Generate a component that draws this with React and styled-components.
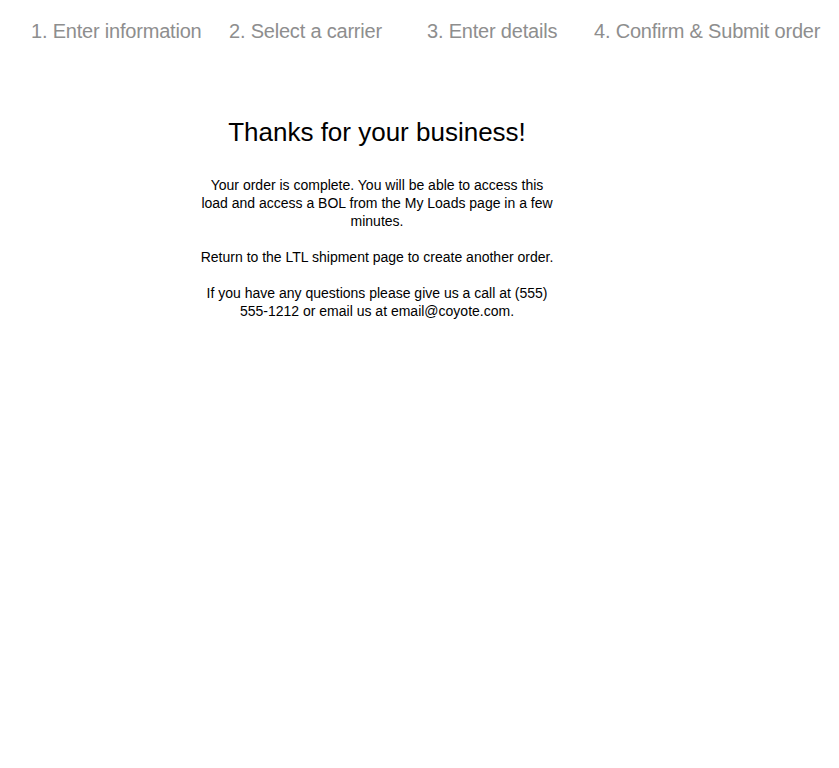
import React from 'react';
import styled, { createGlobalStyle } from 'styled-components';

const GlobalStyle = createGlobalStyle`
  body {
    margin: 0;
    background: #fff;
    font-family: "Liberation Sans", Arial, Helvetica, sans-serif;
  }
`;

const Steps = styled.ol`
  display: flex;
  list-style: none;
  margin: 0;
  padding: 19px 0 0 31px;
  white-space: nowrap;
`;

const Step = styled.li`
  flex: 0 0 ${props => props.width}px;
  font-size: 20px;
  line-height: 24px;
  letter-spacing: -0.2px;
  color: #8e8e8e;
`;

const Content = styled.section`
  width: 360px;
  margin: 0 0 0 197px;
  padding-top: 73px;
  text-align: center;
  color: #000;
`;

const Title = styled.h1`
  margin: 0 0 28px;
  font-size: 26px;
  line-height: 32px;
  font-weight: 400;
`;

const Paragraph = styled.p`
  margin: 0 0 18px;
  font-size: 14px;
  line-height: 18px;
`;

const steps = [
  { label: '1. Enter information', width: 198 },
  { label: '2. Select a carrier', width: 198 },
  { label: '3. Enter details', width: 167 },
  { label: '4. Confirm & Submit order', width: 240 },
];

function App() {
  return (
    <>
      <GlobalStyle />
      <Steps>
        {steps.map(step => (
          <Step key={step.label} width={step.width}>{step.label}</Step>
        ))}
      </Steps>
      <Content>
        <Title>Thanks for your business!</Title>
        <Paragraph>
          Your order is complete. You will be able to access this load and access a BOL from the My Loads page in a few minutes.
        </Paragraph>
        <Paragraph>Return to the LTL shipment page to create another order.</Paragraph>
        <Paragraph>
          If you have any questions please give us a call at (555) 555-1212 or email us at email@coyote.com.
        </Paragraph>
      </Content>
    </>
  );
}

export default App;
